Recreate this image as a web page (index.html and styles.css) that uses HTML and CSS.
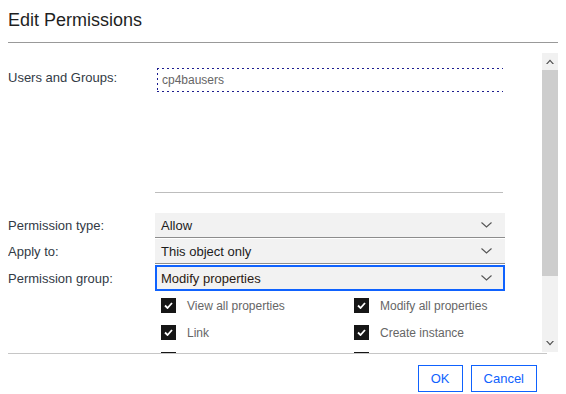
FILE: index.html
```html
<!DOCTYPE html>
<html lang="en">
<head>
  <meta charset="UTF-8">
  <title>Edit Permissions</title>
  <link rel="stylesheet" href="styles.css">
</head>
<body>
  <div class="dialog">
    <div class="dialog-header">
      <h1>Edit Permissions</h1>
    </div>

    <div class="dialog-body">
      <div class="content">
        <div class="form-row users-row">
          <label class="field-label">Users and Groups:</label>
          <div class="users-box">
            <div class="user-item">cp4bausers</div>
          </div>
        </div>

        <div class="selects">
          <div class="form-row">
            <label class="field-label">Permission type:</label>
            <div class="select">
              <span>Allow</span>
              <svg class="chevron" width="11" height="6" viewBox="0 0 11 6"><path d="M0.5 0.5 L5.5 5 L10.5 0.5" fill="none" stroke="#555" stroke-width="1.1"/></svg>
            </div>
          </div>
          <div class="form-row">
            <label class="field-label">Apply to:</label>
            <div class="select">
              <span>This object only</span>
              <svg class="chevron" width="11" height="6" viewBox="0 0 11 6"><path d="M0.5 0.5 L5.5 5 L10.5 0.5" fill="none" stroke="#555" stroke-width="1.1"/></svg>
            </div>
          </div>
          <div class="form-row">
            <label class="field-label">Permission group:</label>
            <div class="select focused">
              <span>Modify properties</span>
              <svg class="chevron" width="11" height="6" viewBox="0 0 11 6"><path d="M0.5 0.5 L5.5 5 L10.5 0.5" fill="none" stroke="#555" stroke-width="1.1"/></svg>
            </div>
          </div>
        </div>

        <div class="checks">
          <div class="check"><span class="box"><svg width="9" height="7" viewBox="0 0 9 7"><path d="M1 3.5 L3.5 6 L8 1" fill="none" stroke="#fff" stroke-width="1.8"/></svg></span>View all properties</div>
          <div class="check"><span class="box"><svg width="9" height="7" viewBox="0 0 9 7"><path d="M1 3.5 L3.5 6 L8 1" fill="none" stroke="#fff" stroke-width="1.8"/></svg></span>Modify all properties</div>
          <div class="check"><span class="box"><svg width="9" height="7" viewBox="0 0 9 7"><path d="M1 3.5 L3.5 6 L8 1" fill="none" stroke="#fff" stroke-width="1.8"/></svg></span>Link</div>
          <div class="check"><span class="box"><svg width="9" height="7" viewBox="0 0 9 7"><path d="M1 3.5 L3.5 6 L8 1" fill="none" stroke="#fff" stroke-width="1.8"/></svg></span>Create instance</div>
          <!-- next row, scrolled out of view -->
          <div class="check"><span class="box"></span></div>
          <div class="check"><span class="box"></span></div>
        </div>
      </div>

      <!-- scrollbar -->
      <div class="scrollbar">
        <div class="sb-btn">
          <svg width="8" height="5" viewBox="0 0 8 5"><path d="M0 5 L4 0.5 L8 5 L6.5 5 L4 2.3 L1.5 5 Z" fill="#505050"/></svg>
        </div>
        <div class="sb-thumb"></div>
        <div class="sb-track"></div>
        <div class="sb-btn">
          <svg width="8" height="5" viewBox="0 0 8 5"><path d="M0 0 L4 4.5 L8 0 L6.5 0 L4 2.7 L1.5 0 Z" fill="#505050"/></svg>
        </div>
      </div>
    </div>

    <div class="dialog-footer">
      <button type="button" class="btn">OK</button>
      <button type="button" class="btn">Cancel</button>
    </div>
  </div>
</body>
</html>
```

FILE: styles.css
```css
body {
  margin: 0;
  font-family: "Liberation Sans", Arial, sans-serif;
  background: #fff;
  color: #333;
}

.dialog {
  width: 566px;
  height: 394px;
  overflow: hidden;
}

.dialog-header {
  margin: 0 8px;
  padding: 8px 0 10px;
  border-bottom: 1px solid #999;
}

.dialog-header h1 {
  margin: 0;
  font-size: 18px;
  line-height: 24px;
  font-weight: normal;
  color: #1f1f1f;
}

.dialog-body {
  position: relative;
  margin: 10px 8px 0;
  height: 300px;
}

.content {
  height: 285px;
  margin-right: 11px;
  padding-top: 15px;
  overflow: hidden;
  border-bottom: 1px solid #c6c6c6;
}

.form-row {
  display: flex;
  align-items: center;
}

.field-label {
  width: 147px;
  flex-shrink: 0;
  font-size: 13px;
  line-height: 18px;
  color: #323a45;
}

.users-row {
  align-items: flex-start;
}

.users-row .field-label {
  margin-top: 1px;
}

.users-box {
  width: 348px;
  height: 124px;
  border-bottom: 1px solid #bdbdbd;
}

/* focus ring drawn as sparse dots, top / bottom / left only */
.user-item {
  margin-left: 2px;
  height: 24px;
  padding-left: 5px;
  font-size: 12px;
  line-height: 24px;
  color: #666;
  background:
    repeating-linear-gradient(to right, #1c1c8f 0 2px, transparent 2px 5px) top left / 100% 1px no-repeat,
    repeating-linear-gradient(to right, #1c1c8f 0 2px, transparent 2px 5px) bottom left / 100% 1px no-repeat,
    repeating-linear-gradient(to bottom, #1c1c8f 0 2px, transparent 2px 5px) top left / 1px 100% no-repeat;
}

.selects {
  margin-top: 20px;
}

.select {
  width: 350px;
  height: 25px;
  box-sizing: border-box;
  display: flex;
  align-items: center;
  justify-content: space-between;
  padding: 0 13px 0 6px;
  background: #f2f2f2;
  border-bottom: 1px solid #8d8d8d;
  font-size: 13px;
  color: #1c1c1c;
  margin-bottom: 1px;
}

.select.focused {
  height: 26px;
  border: 2px solid #0f62fe;
  padding-left: 4px;
  padding-right: 11px;
  color: #2a1a12;
}

.checks {
  display: grid;
  grid-template-columns: 193px 1fr;
  row-gap: 12px;
  padding: 6px 0 0 153px;
}

.check {
  display: flex;
  align-items: center;
  height: 15px;
  font-size: 12px;
  color: #666;
}

.check .box {
  width: 15px;
  height: 15px;
  margin-right: 11px;
  background: #161616;
  display: flex;
  align-items: center;
  justify-content: center;
}

.scrollbar {
  position: absolute;
  top: 0;
  right: 0;
  bottom: 1px;
  width: 16px;
  display: flex;
  flex-direction: column;
  background: #f1f1f1;
}

.sb-btn {
  height: 17px;
  display: flex;
  align-items: center;
  justify-content: center;
}

.sb-thumb {
  height: 206px;
  background: #cdcdcd;
}

.sb-track {
  flex: 1;
}

.dialog-footer {
  display: flex;
  justify-content: flex-end;
  gap: 8px;
  padding: 12px 29px 0 0;
}

.btn {
  height: 27px;
  padding: 0 12px;
  background: #fff;
  border: 1px solid #0f62fe;
  color: #0f62fe;
  font-family: "Liberation Sans", Arial, sans-serif;
  font-size: 13px;
  cursor: pointer;
}
```
